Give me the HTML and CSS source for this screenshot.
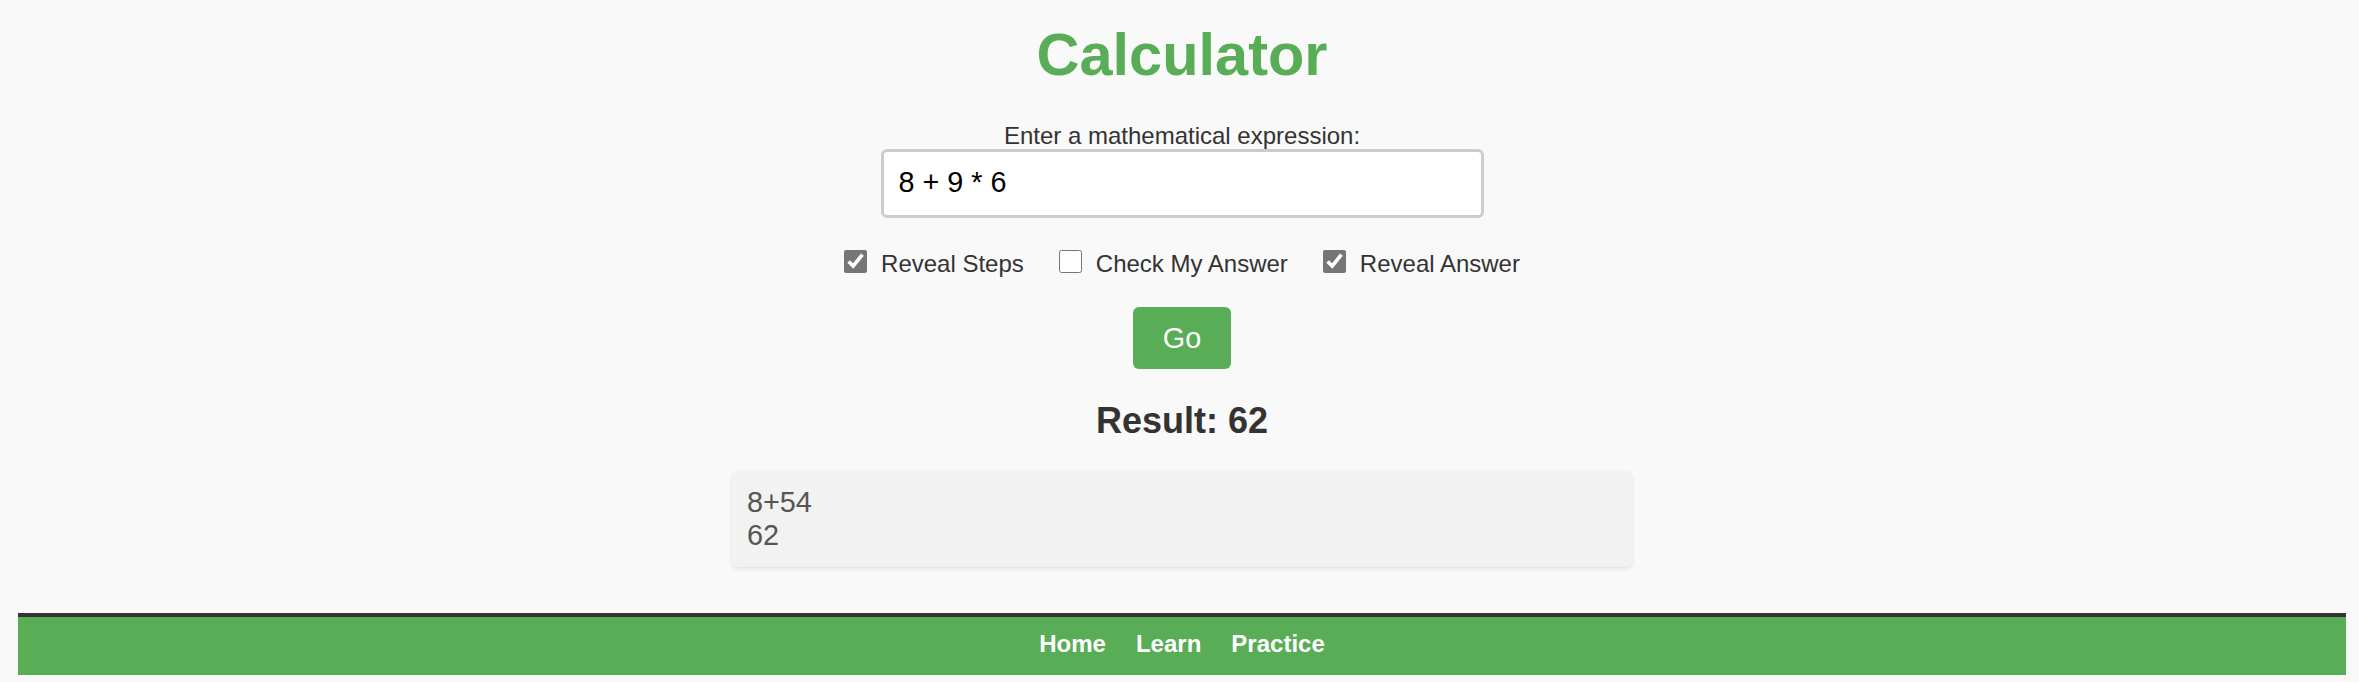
FILE: index.html
```html
<!DOCTYPE html>
<html lang="en">
<head>
<meta charset="utf-8">
<title>Calculator</title>
<link rel="stylesheet" href="styles.css">
</head>
<body>
  <main class="calc">
    <h1 class="title">Calculator</h1>
    <label class="prompt" for="expr">Enter a mathematical expression:</label>
    <input class="expr" id="expr" type="text" value="8 + 9 * 6">
    <div class="options">
      <label class="option"><input type="checkbox" checked><span>Reveal Steps</span></label>
      <label class="option"><input type="checkbox"><span>Check My Answer</span></label>
      <label class="option"><input type="checkbox" checked><span>Reveal Answer</span></label>
    </div>
    <button class="go" type="button">Go</button>
    <h2 class="result">Result: 62</h2>
    <div class="steps">
      <div class="step">8+54</div>
      <div class="step">62</div>
    </div>
  </main>
  <footer class="footer">
    <a href="#" class="nav-link">Home</a>
    <a href="#" class="nav-link">Learn</a>
    <a href="#" class="nav-link">Practice</a>
  </footer>
</body>
</html>
```

FILE: styles.css
```css
html, body {
  margin: 0;
  padding: 0;
}

body {
  background: #f9f9f9;
  font-family: "Liberation Sans", Arial, sans-serif;
  color: #333;
  padding: 0 13px 7px 18px;
}

.calc {
  display: flex;
  flex-direction: column;
  align-items: center;
}

.title {
  margin: 22px 0 0;
  font-size: 59.5px;
  line-height: 66px;
  font-weight: bold;
  color: #58ad56;
}

.prompt {
  margin-top: 34px;
  font-size: 24px;
  line-height: 27px;
  color: #333;
}

.expr {
  margin: 0;
  box-sizing: border-box;
  width: 603px;
  height: 69px;
  padding: 0 15px 2px;
  border: 3px solid #cccccc;
  border-radius: 6px;
  background: #fff;
  font-family: "Liberation Sans", Arial, sans-serif;
  font-size: 28.8px;
  color: #000;
  outline: none;
}

.options {
  margin-top: 32px;
  display: flex;
  gap: 35px;
  font-size: 24px;
  line-height: 28px;
}

.option {
  display: flex;
  align-items: flex-start;
  gap: 14px;
}

.option input {
  margin: 0;
  width: 23px;
  height: 23px;
  accent-color: #767676;
}

.go {
  margin-top: 29px;
  padding: 15px 30px;
  border: none;
  border-radius: 6px;
  background: #58ad56;
  color: #fff;
  font-family: "Liberation Sans", Arial, sans-serif;
  font-size: 28.8px;
  line-height: 32px;
}

.result {
  margin: 31px 0 0;
  font-size: 36px;
  line-height: 41px;
  font-weight: bold;
  color: #333;
}

.steps {
  margin-top: 30px;
  box-sizing: border-box;
  width: 900px;
  padding: 15px;
  background: #f2f2f2;
  border-radius: 6px;
  box-shadow: 0 2px 4px rgba(0, 0, 0, 0.1);
  font-size: 28.8px;
  line-height: 33px;
  color: #555;
}

.footer {
  margin-top: 46px;
  border-top: 4px solid #333;
  background: #58ad56;
  padding: 13px 0 17px;
  text-align: center;
  font-size: 24px;
  line-height: 28px;
}

.nav-link {
  margin: 0 11.7px;
  color: #fff;
  font-weight: bold;
  text-decoration: none;
}
```
